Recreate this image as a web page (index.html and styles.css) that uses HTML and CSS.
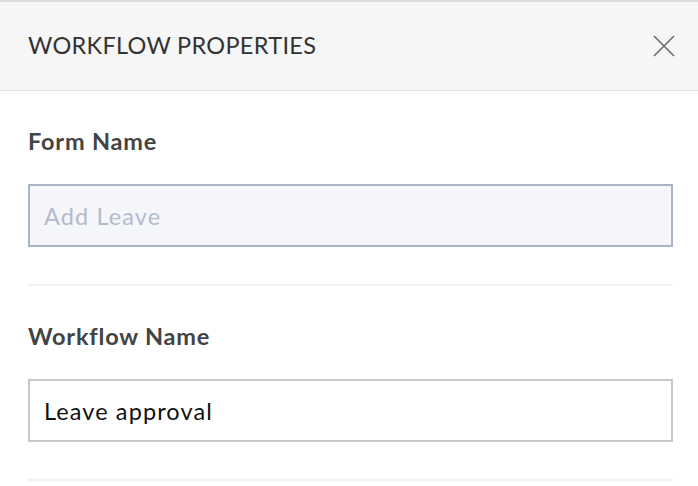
FILE: index.html
```html
<!DOCTYPE html>
<html>
<head>
<meta charset="utf-8">
<link rel="stylesheet" href="styles.css">
</head>
<body>
<div class="panel">
  <div class="header">
    <div class="title">WORKFLOW PROPERTIES</div>
    <svg class="close" width="24" height="24" viewBox="0 0 24 24"><path d="M2 2 L22 22 M22 2 L2 22" stroke="#6b6b6b" stroke-width="1.6" fill="none"/></svg>
  </div>
  <div class="content">
    <div class="section">
      <div class="label">Form Name</div>
      <div class="field field-disabled">Add Leave</div>
    </div>
    <div class="section">
      <div class="label">Workflow Name</div>
      <div class="field">Leave approval</div>
    </div>
  </div>
</div>
</body>
</html>
```
FILE: styles.css
```css
html, body {
  margin: 0;
  padding: 0;
  background: #ffffff;
  font-family: Lato, "Liberation Sans", sans-serif;
}
.header {
  border-top: 2px solid #dcdcdc;
  border-bottom: 1px solid #dfe1e5;
  background: #f6f6f6;
  box-sizing: border-box;
  height: 91px;
  display: flex;
  align-items: center;
  justify-content: space-between;
  padding: 0 22px 0 28px;
}
.title {
  font-size: 23.5px;
  color: #333333;
  line-height: 28px;
  margin-top: -2px;
  letter-spacing: 0.3px;
}
.close {
  display: block;
}
.content {
  padding: 0 25px 0 28px;
}
.section {
  padding-top: 36px;
  padding-bottom: 37px;
  border-bottom: 2px solid #f0f0f0;
}
.label {
  font-size: 23.5px;
  font-weight: bold;
  color: #444444;
  line-height: 28px;
  margin-bottom: 29px;
  letter-spacing: 0.8px;
}
.field {
  height: 63px;
  box-sizing: border-box;
  border: 2px solid #c8c8cc;
  padding: 0 14px;
  display: flex;
  align-items: center;
  font-size: 23.5px;
  color: #111111;
  letter-spacing: 1.1px;
}
.field-disabled {
  background: #f4f6fa;
  border-color: #aab4c8;
  color: #b2bbcc;
}
```
